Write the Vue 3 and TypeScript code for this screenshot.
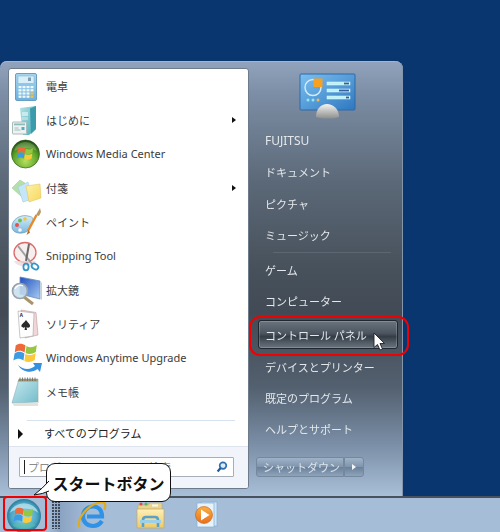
<script setup lang="ts">
const leftItems = [
  { icon: 'calc', label: '電卓', more: false },
  { icon: 'hint', label: 'はじめに', more: true },
  { icon: 'wmc', label: 'Windows Media Center', more: false },
  { icon: 'notes', label: '付箋', more: true },
  { icon: 'paint', label: 'ペイント', more: false },
  { icon: 'snip', label: 'Snipping Tool', more: false },
  { icon: 'mag', label: '拡大鏡', more: false },
  { icon: 'sol', label: 'ソリティア', more: false },
  { icon: 'any', label: 'Windows Anytime Upgrade', more: false },
  { icon: 'pad', label: 'メモ帳', more: false },
]
const rightA = ['FUJITSU', 'ドキュメント', 'ピクチャ', 'ミュージック']
const rightB = ['ゲーム', 'コンピューター']
const rightC = ['デバイスとプリンター', '既定のプログラム', 'ヘルプとサポート']
const calcKeys = Array.from({ length: 16 }, (_, i) => ({ x: 7.5 + (i % 4) * 4, y: 16 + Math.floor(i / 4) * 3.2, hot: i % 4 === 3 && i > 7 }))
const spiral = [9, 11.500, 14, 16.500, 19, 21.500, 24]
</script>

<template>
  <div class="screen">
    <svg class="defs" width="0" height="0" aria-hidden="true">
      <defs>
        <symbol id="flag" viewBox="0 0 32 32">
          <path fill="#ee6a3a" d="M5 8C8 5.500 12 5.500 15.500 8L14.500 15.500C11 13 7 13 4 15.500Z" />
          <path fill="#95c83e" d="M16.500 8.500C19.500 10.500 23 10.500 27.500 7.500L26.500 15C22.500 17.500 18.500 17.500 15.500 16Z" />
          <path fill="#3c9be4" d="M3.800 16.500C7 14 11 14 14.300 16.500L13.300 24C10 21.500 6 21.500 2.500 24Z" />
          <path fill="#fbc93a" d="M15.300 17C18.500 18.800 22.500 18.800 26.300 16L25.300 23.500C21.500 26 17.500 26 14.300 24.500Z" />
        </symbol>
        <linearGradient id="g-calc" x1="0" y1="0" x2="0" y2="1"><stop offset="0" stop-color="#a8d6f0" /><stop offset="1" stop-color="#6cb2dc" /></linearGradient>
        <linearGradient id="g-teal" x1="0" y1="0" x2="1" y2="1"><stop offset="0" stop-color="#b4e2e6" /><stop offset="1" stop-color="#4aaab8" /></linearGradient>
        <radialGradient id="g-wmc" cx=".5" cy=".75" r=".8"><stop offset="0" stop-color="#b8e060" /><stop offset=".55" stop-color="#5aa428" /><stop offset="1" stop-color="#14380c" /></radialGradient>
        <linearGradient id="g-yellow" x1="0" y1="0" x2="1" y2="1"><stop offset="0" stop-color="#fdf2a8" /><stop offset="1" stop-color="#f8d75c" /></linearGradient>
        <linearGradient id="g-pal" x1="0" y1="0" x2="0" y2="1"><stop offset="0" stop-color="#d6eefa" /><stop offset="1" stop-color="#78b8e0" /></linearGradient>
        <linearGradient id="g-screen" x1="0" y1="0" x2="1" y2="1"><stop offset="0" stop-color="#1f4fc0" /><stop offset="1" stop-color="#a8ccf2" /></linearGradient>
        <linearGradient id="g-pad" x1="0" y1="0" x2="1" y2="1"><stop offset="0" stop-color="#c8eaee" /><stop offset="1" stop-color="#74bccb" /></linearGradient>
        <linearGradient id="g-panel" x1="0" y1="0" x2="1" y2="1"><stop offset="0" stop-color="#7cc0f0" /><stop offset="1" stop-color="#2f78c0" /></linearGradient>
        <linearGradient id="g-dome" x1="0" y1="0" x2="0" y2="1"><stop offset="0" stop-color="#f4f4f2" /><stop offset="1" stop-color="#8d8f8d" /></linearGradient>
        <radialGradient id="g-orb" cx=".5" cy=".5" r=".55"><stop offset="0" stop-color="#9fdcec" /><stop offset=".7" stop-color="#4aa6c4" /><stop offset="1" stop-color="#1c6a88" /></radialGradient>
        <linearGradient id="g-folder" x1="0" y1="0" x2="0" y2="1"><stop offset="0" stop-color="#fdf0b8" /><stop offset="1" stop-color="#efc964" /></linearGradient>
        <linearGradient id="g-play" x1="0" y1="0" x2="0" y2="1"><stop offset="0" stop-color="#fbb040" /><stop offset="1" stop-color="#e8701c" /></linearGradient>
      </defs>
    </svg>

    <div class="desktop-top"></div>
    <main class="menu">
      <section class="left">
        <ul class="programs">
          <li v-for="item in leftItems" :key="item.label" class="row">
            <svg class="icon" viewBox="0 0 32 32" width="32" height="32">
              <template v-if="item.icon === 'calc'">
                <rect x="4.500" y="3.500" width="21" height="27" rx="1.500" fill="url(#g-calc)" stroke="#6a9fc2" />
                <rect x="7" y="6" width="16" height="7.500" fill="#d8effa" stroke="#86b6d2" stroke-width=".6" />
                <rect x="17" y="7.500" width="3" height="3.500" fill="#7f9cb0" />
                <rect v-for="(k, i) in calcKeys" :key="i" :x="k.x" :y="k.y" width="3" height="2.200" :fill="k.hot ? '#f2c14e' : '#f0f8fc'" />
              </template>
              <template v-else-if="item.icon === 'hint'">
                <path d="M9 4L25 2V25L18 31H12Z" fill="url(#g-teal)" />
                <path d="M19 4.500L25 2V25L20 30Z" fill="#3a9cab" />
                <rect x="11" y="8" width="6" height="4" fill="#d4f0f2" opacity=".8" /><rect x="11" y="13" width="6" height="3" fill="#d4f0f2" opacity=".5" />
                <rect x="1.500" y="18" width="14" height="12" rx=".6" fill="#eef2f2" stroke="#a8bcba" />
                <rect x="3" y="19.500" width="11" height="1.800" fill="#8abcbc" />
                <path d="M3.500 24h4M3.500 26h6" stroke="#94aeae" stroke-width=".8" /><rect x="10.500" y="23" width="3" height="3" fill="#4cb0cc" />
              </template>
              <template v-else-if="item.icon === 'wmc'">
                <circle cx="14.500" cy="16" r="14" fill="url(#g-wmc)" stroke="#2a4f1a" stroke-width=".6" />
                <path d="M3.500 13A11 9 0 0 1 25.500 13C19 9 10 9 3.500 13Z" fill="#fff" opacity=".2" />
                <use href="#flag" x="4" y="5" width="21" height="21" />
              </template>
              <template v-else-if="item.icon === 'notes'">
                <path d="M1 16L9 8L17 13L11 25Z" fill="#b2e0a8" stroke="#94c894" stroke-width=".5" />
                <path d="M7 15L17 10L22 27L12 30Z" fill="#c4e6f8" stroke="#9cc6e0" stroke-width=".5" />
                <path d="M15 14L29 12L30 26L18 30Z" fill="url(#g-yellow)" stroke="#dcc058" stroke-width=".5" />
              </template>
              <template v-else-if="item.icon === 'paint'">
                <path d="M1 22C0 14 9 8 17 10C24 11 23 15 20 18C18 20 20 22 18 24C14 28 3 29 1 22Z" fill="url(#g-pal)" stroke="#6c98b8" stroke-width=".7" />
                <circle cx="6" cy="19" r="2" fill="#e8504a" /><circle cx="9" cy="14.500" r="1.900" fill="#6cc04c" /><circle cx="14" cy="13" r="1.800" fill="#f3c43a" /><circle cx="9" cy="24" r="2" fill="#f8f8f8" stroke="#8fb8d0" stroke-width=".4" />
                <path d="M25.500 9L17 25" stroke="#e88a26" stroke-width="2.400" />
                <path d="M25 9L29 2L30 6L28 10Z" fill="#b89a68" />
                <path d="M17.500 24L15.500 29L19 26.500Z" fill="#a8642a" />
              </template>
              <template v-else-if="item.icon === 'snip'">
                <ellipse cx="14" cy="12.500" rx="11" ry="10" fill="#f7eeee" stroke="#dc6a6a" stroke-width="1.300" />
                <path d="M3 21C6 28 20 28 25 21" fill="#eadadc" opacity=".8" />
                <path d="M7 6L21 24" stroke="#a0a0a0" stroke-width="2" /><path d="M18 4L15 21" stroke="#6a6a6a" stroke-width="2" />
                <ellipse cx="24" cy="26.500" rx="3.600" ry="2.600" fill="none" stroke="#3496c8" stroke-width="1.800" transform="rotate(35 24 26.500)" />
                <ellipse cx="15" cy="27" rx="2.600" ry="3.300" fill="none" stroke="#3496c8" stroke-width="1.800" />
              </template>
              <template v-else-if="item.icon === 'mag'">
                <path d="M9 3L29 7V25L9 20Z" fill="url(#g-screen)" stroke="#6a8cb4" stroke-width=".8" />
                <path d="M29 7L31 9V26L29 25Z" fill="#c4d2e2" />
                <path d="M13 23L22 30" stroke="#a8946c" stroke-width="3" />
                <circle cx="9" cy="17" r="7.500" fill="#c5ddec" fill-opacity=".85" stroke="#98a2ac" stroke-width="1.700" />
                <path d="M4 15A5.500 5.500 0 0 1 12 12" fill="none" stroke="#fff" stroke-width="1.200" />
              </template>
              <template v-else-if="item.icon === 'sol'">
                <path d="M10 2L25 4.500L27 27L14 30Z" fill="#f0d6d8" stroke="#c09a9e" stroke-width=".6" />
                <path d="M7 3L23 5L22 28L9 30Z" fill="#fdfdfd" stroke="#a4a4a4" stroke-width=".6" />
                <path d="M15 12C17 15 19.500 16 19 18.500C18 20 16 20 15.500 18.800L16 22H13.500L14.200 18.800C13.500 20 11 20 10.500 18.500C10 16 13 15 15 12Z" fill="#2a2a2a" />
                <text x="8.500" y="9" class="ace">A</text>
              </template>
              <template v-else-if="item.icon === 'any'">
                <use href="#flag" x="0" y="-4" width="30" height="30" />
                <path d="M7 23C13 29 21 27 24 24L22 21L31 21L29 30L26.500 27C20 32 11 30 7 23Z" fill="#3590de" />
              </template>
              <template v-else-if="item.icon === 'pad'">
                <path d="M8 3L27 3L27 26L1 27Z" fill="url(#g-pad)" stroke="#8ab2ba" stroke-width=".6" />
                <path d="M27 3L28 27L1 27L3 30L27 30Z" fill="#e2e2d8" />
                <path d="M8 3L27 3L26.500 5.500L6.500 5.500Z" fill="#a09878" />
                <path v-for="s in spiral" :key="s" :d="`M${s} 1.500V5`" stroke="#6f6a58" stroke-width=".8" />
              </template>
            </svg>
            <span class="label">{{ item.label }}</span>
            <span v-if="item.more" class="caret"></span>
          </li>
        </ul>
        <div class="sep-left"></div>
        <div class="all"><span class="caret all-caret"></span><span class="all-label">すべてのプログラム</span></div>
        <div class="search-area">
          <div class="search">
            <i class="text-cursor"></i><span class="placeholder">プログラムとファイルの検索</span>
            <svg class="lens" viewBox="0 0 12 12" width="12" height="12">
              <circle cx="7" cy="4.600" r="3.300" fill="#d8ecfa" stroke="#2f6fb0" stroke-width="1.700" />
              <path d="M4.600 7L1.600 10.400" stroke="#1f5a98" stroke-width="2.200" />
            </svg>
          </div>
        </div>
      </section>

      <section class="right">
        <svg class="panel-icon" viewBox="0 0 58 46" width="58" height="46">
          <rect x="1" y="1" width="55" height="36" rx="1" fill="url(#g-panel)" stroke="#2c6aa8" />
          <circle cx="14" cy="14.500" r="8" fill="none" stroke="#d5ecfa" stroke-width="1.400" />
          <path d="M14.500 5.500H23.500V14H14.500Z" fill="#f8a020" />
          <g fill="#b8f2fa" stroke="#e8fafc" stroke-width=".5"><rect x="28" y="9" width="23" height="3" /><rect x="28" y="16" width="23" height="3" /><rect x="28" y="23" width="23" height="3" /></g>
          <g fill="#3a5f96"><rect x="45" y="9.600" width="5" height="1.800" /><rect x="40" y="16.600" width="10" height="1.800" /><rect x="47" y="23.600" width="3" height="1.800" /></g>
          <circle cx="9" cy="27" r="1.500" fill="#8fe8fa" /><circle cx="14" cy="27" r="1.500" fill="#8fe8fa" /><circle cx="19" cy="27" r="1.500" fill="#f8b850" />
          <path d="M17 44C17 36 22 31 28 31C34 31 40 36 40 44C34 46 23 46 17 44Z" fill="url(#g-dome)" />
        </svg>
        <div class="links">
          <a v-for="t in rightA" :key="t" class="link" :class="{ latin: t === 'FUJITSU' }">{{ t }}</a>
          <div class="sep-right"></div>
          <a v-for="t in rightB" :key="t" class="link">{{ t }}</a>
          <a class="link hot">コントロール パネル</a>
          <a v-for="t in rightC" :key="t" class="link">{{ t }}</a>
        </div>
        <div class="shutdown">
          <button class="sd-main">シャットダウン</button>
          <button class="sd-arrow"><span></span></button>
        </div>
      </section>
    </main>

    <footer class="taskbar">
      <svg class="orb" viewBox="0 0 36 36" width="36" height="36">
        <circle cx="18" cy="18" r="17" fill="url(#g-orb)" />
        <path d="M3.500 15A15 13 0 0 1 32.500 15C25 9 11 9 3.500 15Z" fill="#e8f8ff" opacity=".55" />
        <path d="M6 27A15 9 0 0 0 30 27C24 24 12 24 6 27Z" fill="#5cc4a0" opacity=".5" />
        <use href="#flag" x="5.500" y="5" width="25" height="25" />
      </svg>
      <div class="grip"></div>
      <svg class="tb ie" viewBox="0 0 30 30" width="30" height="30">
        <path d="M10 16.500H25C25 10 21 6.500 16 6.500C10 6.500 6 11 6 16.500C6 22 10 26 16 26C20 26 23 24 25 21" fill="none" stroke="#2f92e6" stroke-width="4.200" />
        <path d="M2.500 27C-.5 20 9 6 22 2.500C28 1 29.500 4 27.500 10" fill="none" stroke="#e2ac18" stroke-width="2.200" />
      </svg>
      <svg class="tb folder" viewBox="0 0 30 30" width="30" height="30">
        <path d="M2 5H12L14 3H26V10H2Z" fill="#e8d490" stroke="#c8a858" stroke-width=".6" />
        <circle cx="5" cy="4" r="1.500" fill="#e04c3c" /><circle cx="10" cy="4" r="1.500" fill="#5cb84c" /><rect x="16" y="4.500" width="6" height="2" fill="#f8f8f0" />
        <path d="M1 9H28V28H1Z" fill="url(#g-folder)" stroke="#c8a858" stroke-width=".7" />
        <path d="M7 27V20Q7 17 10 17H19Q22 17 22 20V27" fill="none" stroke="#5aa0c8" stroke-width="2.600" />
        <path d="M4 20H25V23H4Z" fill="#9cd0e8" />
      </svg>
      <svg class="tb wmp" viewBox="0 0 26 30" width="26" height="30">
        <rect x="8" y="2" width="16" height="24" fill="#cfe4f4" stroke="#7fb0d4" stroke-width=".7" />
        <rect x="4" y="3" width="17" height="24" fill="#e8f2fa" stroke="#7fb0d4" stroke-width=".7" />
        <circle cx="11" cy="15" r="8.500" fill="url(#g-play)" stroke="#c05c18" stroke-width=".6" />
        <path d="M8 9.500L16.500 15L8 20.500Z" fill="#fff" />
      </svg>
    </footer>

    <div class="ring ring-panel"></div>
    <div class="ring ring-start"></div>
    <svg class="cursor" viewBox="0 0 14 20" width="14" height="20">
      <path d="M1 1V15.500L4.500 12.500L7 18L9.500 17L7 11.500H11.500Z" fill="#fff" stroke="#222" stroke-width=".9" />
    </svg>
    <div class="tip">
      <svg class="tail" viewBox="0 0 18 18" width="18" height="18">
        <path d="M16 1Q10 8 1 15Q10 14 16 11" fill="#fff" stroke="#111" stroke-width="1" />
      </svg>
      スタートボタン
    </div>
  </div>
</template>

<style>
html, body { margin: 0; background: #0a3670; }
</style>

<style scoped>
.screen { position: relative; width: 500px; height: 532px; overflow: hidden; background: #0a3670; display: flex; flex-direction: column; font-family: "Noto Sans", "Noto Sans CJK JP", sans-serif; }
.defs { position: absolute; }
.desktop-top { height: 61px; flex: none; }
.menu { width: 403px; height: 435px; flex: none; box-sizing: border-box; display: flex; padding: 7px 0 7px 8px; border-radius: 7px 8px 0 0; background: linear-gradient(#92a4bd 0, #7b8da4 8%, #5b6877 28%, #47515b 48%, #424b55 58%, #53606f 75%, #7a8ea6 88%, #a9bfd8 100%); box-shadow: inset -1px 0 0 #8396ac, inset 0 1px 0 #a5b5ca; filter: blur(.3px); }
.left { width: 241px; flex: none; box-sizing: border-box; background: #fff; border: 1px solid #6d7b8a; border-radius: 3px; display: flex; flex-direction: column; overflow: hidden; }
.programs { list-style: none; margin: 0; padding: 0; }
.row { height: 34px; display: flex; align-items: center; padding-left: 2px; padding-right: 12px; color: #3c3c3c; font-size: 11px; }
.icon { flex: none; }
.label { margin-left: 3px; padding-bottom: 1px; flex: 1; white-space: nowrap; }
.caret { width: 0; height: 0; border-style: solid; border-width: 3.500px 0 3.500px 4px; border-color: transparent transparent transparent #111; }
.sep-left { height: 1px; margin: 11px 13px 0 18px; background: #d6e2ee; flex: none; }
.all { height: 25px; display: flex; align-items: center; font-size: 11px; color: #222; flex: none; }
.all-caret { border-width: 5px 0 5px 5px; margin: 0 21px 0 9px; }
.all-label { padding-bottom: 2px; }
.search-area { flex: 1; background: #f1f4fa; border-top: 1px solid #dde4ee; padding: 10px 14px 0 10px; }
.search { height: 20px; box-sizing: border-box; background: #fff; border: 1px solid #a8aeb6; border-radius: 1px; display: flex; align-items: center; padding: 0 5px 0 4px; }
.text-cursor { width: 1px; height: 14px; background: #222; flex: none; }
.placeholder { margin-left: 3px; color: #8c8c8c; font-size: 11px; flex: 1; white-space: nowrap; }
.lens { flex: none; }
.right { flex: 1; display: flex; flex-direction: column; color: #e4e8ec; font-size: 11px; }
.panel-icon { margin: 5px 0 0 50px; flex: none; }
.links { margin-top: 6.300px; display: flex; flex-direction: column; }
.link { height: 31.400px; display: flex; align-items: center; padding-left: 16px; white-space: nowrap; }
.latin { font-size: 12px; }
.sep-right { height: 1px; margin: .7px 12px 1.600px 24px; background: #5d6773; }
.hot { height: 29px; margin: 3.500px 5px 1.500px 9px; padding-left: 6px; box-sizing: border-box; border: 1px solid #20272e; border-radius: 3px; background: linear-gradient(#6a737e, #4c5661 45%, #343d46 58%, #525c67 80%, #6a737e); box-shadow: inset 0 0 0 1px rgba(255,255,255,.18); }
.shutdown { display: flex; margin: 11.500px 0 0 7px; }
.shutdown button { height: 20px; box-sizing: border-box; padding: 0; font: inherit; color: #dce4ec; border: 1px solid #76889c; background: linear-gradient(#9fb2c8, #8096ad 48%, #6b8199 52%, #8ea4bc); }
.sd-main { width: 88px; border-radius: 3px 0 0 3px; text-align: left; padding-left: 6px !important; }
.sd-arrow { width: 20px; border-radius: 0 3px 3px 0; display: flex; align-items: center; justify-content: center; }
.sd-arrow span { width: 0; height: 0; border-style: solid; border-width: 3.500px 0 3.500px 4px; border-color: transparent transparent transparent #f4f6f8; }
.taskbar { height: 36px; flex: none; box-sizing: border-box; border-top: 2px solid #47525e; background: linear-gradient(90deg, #a6bdd8 0, #a6bdd8 48px, #8aa3c2 60px, #a6bdd8 90px, #a6bdd8 100%); display: flex; align-items: center; padding-left: 6px; filter: blur(.3px); }
.orb { flex: none; margin-top: 1px; }
.grip { width: 8px; height: 28px; margin-left: 10px; flex: none; background-image: radial-gradient(circle at 1px 1px, #3e4a58 .9px, transparent 1px); background-size: 3px 3px; }
.tb { flex: none; }
.ie { margin-left: 17px; }
.folder { margin-left: 29px; }
.wmp { margin-left: 27px; }
.ring { position: absolute; border: 2.500px solid #f00000; box-sizing: border-box; pointer-events: none; }
.ring-panel { left: 249px; top: 316px; width: 160px; height: 40px; border-radius: 11px; }
.ring-start { left: 3px; top: 496px; width: 44px; height: 35px; border-radius: 4px; }
.cursor { position: absolute; left: 373px; top: 332px; }
.tip { position: absolute; left: 46px; top: 463px; width: 125px; height: 39px; box-sizing: border-box; background: #fff; border: 1px solid #111; border-radius: 9px; color: #111; font-size: 16px; font-weight: 700; display: flex; align-items: center; justify-content: center; white-space: nowrap; }
.tail { position: absolute; left: -14px; top: 16px; }
.ace { font: 700 5px "Liberation Sans", sans-serif; fill: #222; }
</style>
